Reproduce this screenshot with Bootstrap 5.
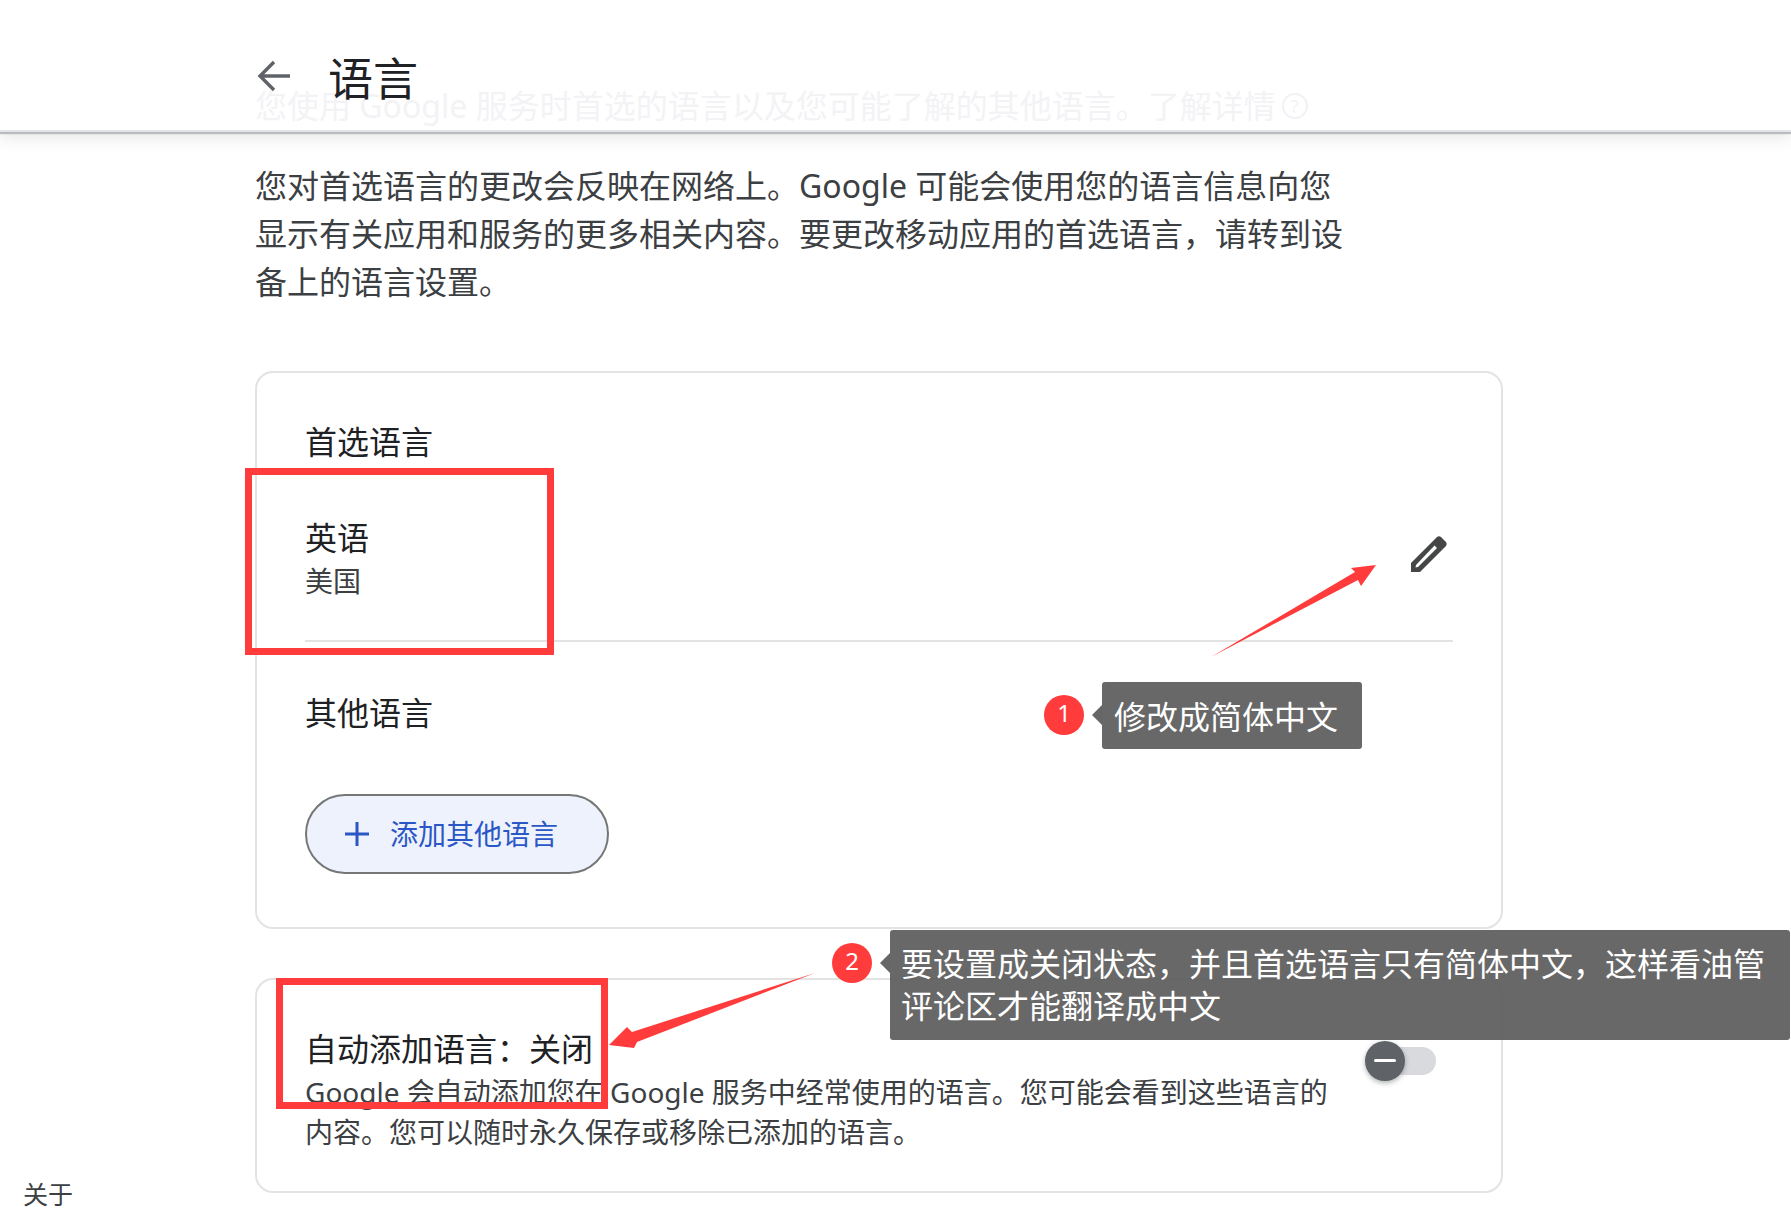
<!doctype html>
<html lang="zh-CN">
<head>
<meta charset="utf-8">
<title>语言</title>
<link rel="stylesheet" href="https://cdn.jsdelivr.net/npm/bootstrap@5.3.0/dist/css/bootstrap.min.css">
<style>
html,body{height:100%;}
body{font-family:"Noto Sans","Noto Sans CJK SC",sans-serif;background:#fff;color:#202124;overflow:hidden;width:1791px;height:1213px;position:relative;}
.top-head{height:130px;background:#fff;position:relative;z-index:2;padding:58px 0 0 257px;box-shadow:0 2px 0 #e2e4e9,0 4px 1px #b9bbbe,0 7px 16px rgba(60,64,67,.14);}
.back-ic{width:34px;height:34px;margin-right:37px;flex:none;}
.head-title{font-size:45px;line-height:41px;color:#202124;position:relative;z-index:1;}
.ghost-line{position:absolute;left:255px;top:86px;font-size:32px;line-height:40px;color:#f3f3f6;white-space:nowrap;display:flex;align-items:center;}
.ghost-q{display:inline-block;width:26px;height:26px;border:2px solid #f1f1f6;border-radius:50%;font-size:18px;line-height:22px;text-align:center;margin-left:6px;}
.page-row{height:1083px;}
.side-col{width:255px;flex:none;padding:0 0 1px 23px;}
.about-link{font-size:25px;line-height:36px;color:#3c4043;}
.main-col{width:1248px;flex:none;}
.intro-text{font-size:32px;line-height:48px;color:#3c4043;margin:32px 0 65px;}
.lang-card{border:2px solid #e3e3e3;border-radius:18px;padding:49px 48px 53px 48px;margin-bottom:49px;background:#fff;}
.lang-head{font-size:32px;line-height:40px;color:#202124;}
.lang-sub{font-size:28px;line-height:40px;color:#3c4043;}
.sub-gap{margin-top:3px;}
.lang-row{padding:0 0 39px;margin-top:56px;border-bottom:2px solid #e3e3e3;}
.other-head{margin-top:51px;}
.pencil-ic{width:38px;height:38px;margin-right:5px;margin-top:-12px;}
.add-btn{height:80px;width:304px;border:2px solid #747775;border-radius:40px;background:#edf2fc;color:#2a56c6;font-size:28px;line-height:1;padding:0 0 0 37px;margin-top:61px;}
.add-btn:hover{background:#edf2fc;color:#2a56c6;border-color:#747775;}
.plus-ic{width:26px;height:26px;margin-right:20px;}
.auto-card{padding:49px 48px 39px 48px;margin-bottom:0;height:215px;}
.auto-text{width:1032px;flex:none;}
.auto-title{margin-bottom:3px;}
.toggle-wrap{position:relative;width:70px;height:40px;margin-right:17px;margin-top:12px;flex:none;}
.toggle-track{position:absolute;left:19px;top:6px;width:51px;height:28px;background:#d8dade;border-radius:0 14px 14px 0;}
.toggle-thumb{position:absolute;left:-1px;top:0;width:40px;height:40px;border-radius:50%;background:#5f6368;box-shadow:0 2px 5px rgba(60,64,67,.4);}
.toggle-thumb::after{content:"";position:absolute;left:9px;top:18px;width:22px;height:3px;background:#fff;border-radius:2px;}
.red-frame{position:absolute;border:7px solid #ff3b3b;z-index:5;}
.frame-one{left:245px;top:468px;width:309px;height:187px;}
.frame-two{left:276px;top:978px;width:332px;height:131px;}
.arrow-layer{position:absolute;left:0;top:0;width:1791px;height:1213px;z-index:6;pointer-events:none;}
.note-dot{position:absolute;width:40px;height:40px;border-radius:50%;background:#ff3b3b;color:#fff;font-size:24px;line-height:36px;text-align:center;z-index:7;}
.note-box{position:absolute;background:rgba(92,92,92,.93);color:#fff;font-size:32px;line-height:42px;border-radius:3px;z-index:7;}
.note-box::before{content:"";position:absolute;left:-10px;width:0;height:0;border-top:10px solid transparent;border-bottom:10px solid transparent;border-right:10px solid #666;}
.note-one{left:1102px;top:682px;width:260px;height:67px;padding:14px 0 0 12px;white-space:nowrap;}
.note-one::before{top:23px;}
.note-two{left:890px;top:930px;width:900px;height:110px;padding:13px 0 0 11px;}
.note-two::before{top:23px;}
.dot-one{left:1044px;top:695px;}
.dot-two{left:832px;top:943px;}
</style>
</head>
<body>
<header class="top-head d-flex align-items-start">
  <svg class="back-ic" viewBox="0 0 34 34" fill="none" stroke="#5f6368" stroke-width="3.4"><path d="M33 18H4M17 4 3 18l14 14"/></svg>
  <h1 class="head-title m-0 fw-normal">语言</h1>
  <div class="ghost-line">您使用 Google 服务时首选的语言以及您可能了解的其他语言。了解详情<span class="ghost-q">?</span></div>
</header>
<div class="page-row d-flex">
  <aside class="side-col d-flex flex-column justify-content-end"><div class="about-link">关于</div></aside>
  <main class="main-col">
    <p class="intro-text">您对首选语言的更改会反映在网络上。Google 可能会使用您的语言信息向您<br>显示有关应用和服务的更多相关内容。要更改移动应用的首选语言，请转到设<br>备上的语言设置。</p>
    <section class="card lang-card">
      <div class="lang-head">首选语言</div>
      <div class="lang-row d-flex justify-content-between align-items-center">
        <div>
          <div class="lang-head">英语</div>
          <div class="lang-sub sub-gap">美国</div>
        </div>
        <svg class="pencil-ic" viewBox="0 0 38 38"><path fill="#444746" fill-rule="evenodd" d="M1 37V28L27 2q2-1.500 4 0l5 5q1.500 2 0 4L10 37ZM6 30l-.5 2.500L8 32 27 13l-2.500-2.500Z"/></svg>
      </div>
      <div class="lang-head other-head">其他语言</div>
      <button type="button" class="btn add-btn d-flex align-items-center">
        <svg class="plus-ic" viewBox="0 0 26 26" fill="none" stroke="#2a56c6" stroke-width="3"><path d="M13 1v24M1 13h24"/></svg>
        添加其他语言
      </button>
    </section>
    <section class="card lang-card auto-card">
      <div class="d-flex justify-content-between align-items-start">
        <div class="auto-text">
          <div class="lang-head auto-title">自动添加语言：关闭</div>
          <div class="lang-sub">Google 会自动添加您在 Google 服务中经常使用的语言。您可能会看到这些语言的内容。您可以随时永久保存或移除已添加的语言。</div>
        </div>
        <div class="toggle-wrap"><span class="toggle-track"></span><span class="toggle-thumb"></span></div>
      </div>
    </section>
  </main>
</div>

<div class="red-frame frame-one"></div>
<div class="red-frame frame-two"></div>
<svg class="arrow-layer" viewBox="0 0 1791 1213">
  <polygon fill="#ff3b3b" points="1211,657 1355,572 1351,568 1376,565 1361,586 1358,580"/>
  <polygon fill="#ff3b3b" points="815,973 637,1042 634,1048 609,1045 627,1027 632,1032"/>
</svg>
<div class="note-dot dot-one">1</div>
<div class="note-box note-one">修改成简体中文</div>
<div class="note-dot dot-two">2</div>
<div class="note-box note-two">要设置成关闭状态，并且首选语言只有简体中文，这样看油管<br>评论区才能翻译成中文</div>
<script src="https://cdn.jsdelivr.net/npm/bootstrap@5.3.0/dist/js/bootstrap.bundle.min.js"></script>
</body>
</html>
